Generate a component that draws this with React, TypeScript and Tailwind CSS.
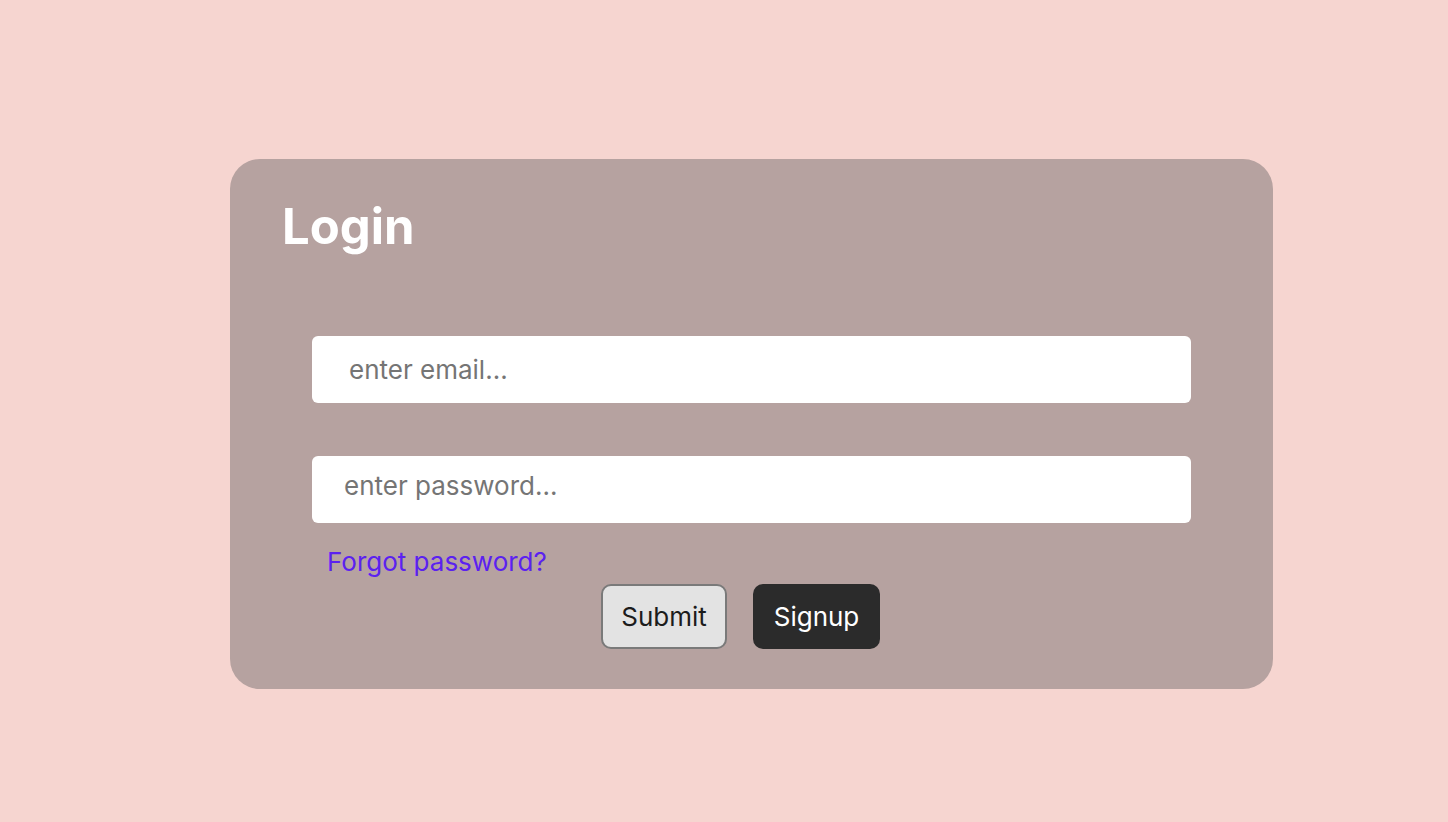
export default function App() {
  return (
    <div
      className="min-h-screen w-full bg-[#f6d5d0] pt-[159px]"
      style={{ fontFamily: 'Inter, "Noto Sans", sans-serif' }}
    >
      <div className="ml-[230px] w-[1043px] h-[530px] rounded-[30px] bg-[#b6a2a0]">
        <h1 className="pl-[52px] pt-[36px] text-[49px] leading-[64px] font-bold text-white">
          Login
        </h1>
        <form className="mx-[82px] mt-[77px] flex flex-col" onSubmit={(e) => e.preventDefault()}>
          <input
            type="email"
            placeholder="enter email..."
            className="h-[67px] w-full rounded-[6px] bg-white pl-[37px] text-[26px] text-gray-800 outline-none placeholder:text-[#757575]"
          />
          <input
            type="password"
            placeholder="enter password..."
            className="mt-[53px] h-[67px] w-full rounded-[6px] bg-white pl-[32px] pb-[8px] text-[26px] text-gray-800 outline-none placeholder:text-[#757575]"
          />
          <a href="#" className="ml-[15px] mt-[22px] self-start text-[26px] leading-[34px] text-[#5b21f0]">
            Forgot password?
          </a>
          <div className="mt-[5px] ml-[289px] flex gap-[26px]">
            <button
              type="submit"
              className="h-[65px] w-[126px] rounded-[10px] border-2 border-[#7a7a7a] bg-[#e3e3e3] text-[26px] text-[#1c1c1c]"
            >
              Submit
            </button>
            <button
              type="button"
              className="h-[65px] w-[127px] rounded-[10px] bg-[#2b2b2b] text-[26px] text-white"
            >
              Signup
            </button>
          </div>
        </form>
      </div>
    </div>
  );
}
